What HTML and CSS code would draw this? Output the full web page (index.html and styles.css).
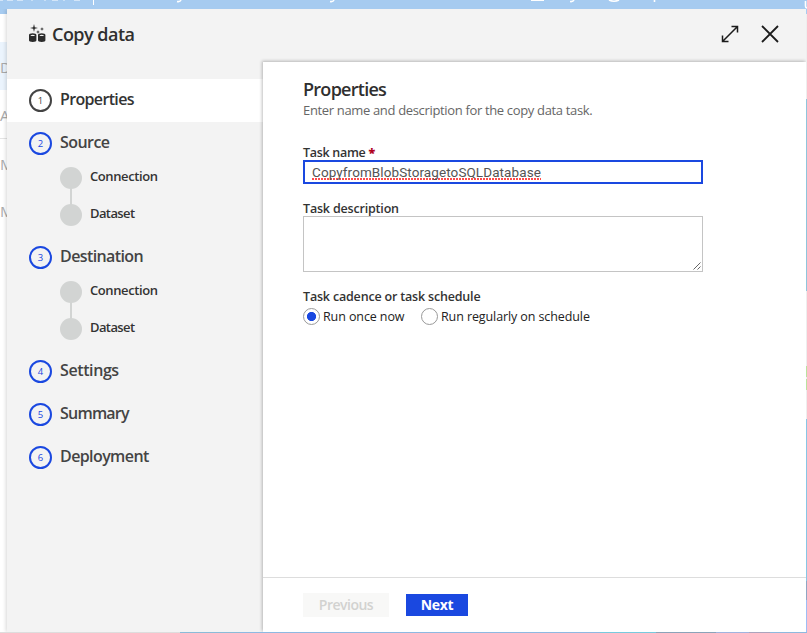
FILE: index.html
```
<!DOCTYPE html>
<html lang="en">
<head>
<meta charset="utf-8">
<title>Copy data</title>
<link rel="stylesheet" href="styles.css">
</head>
<body>
<div class="backdrop" aria-hidden="true">
  <svg class="topbar" width="807" height="14" viewBox="0 0 807 14">
    <g fill="none" stroke="#fff" stroke-width="1.6">
      <path d="M0 .2h3M7 .2h6M17 .2h6M32 0v1M45 0v1M52 .2h6M64 0v1M74 .2h6" opacity=".5"/>
      <path d="M93.500 0v5" stroke-width="1"/>
      <path d="M181 0q-1 2.200-4 1.500M334 0q-1 2.200-4 1.500M531 .3h13M574 0q-1 2-4 1.500M609 0q5 2.500 10 0M654.500 0v2"/>
      <path d="M805.500 1v5q0 2 2 2"/>
    </g>
  </svg>
  <div class="menu"><span class="hot">D</span><span>A</span><span class="ruled">M</span><span>M</span></div>
  <div class="edge"></div>
  <div class="floor"></div>
</div>
<main class="dialog">
  <header class="header">
    <svg class="logo" width="18" height="19" viewBox="0 0 18 19" fill="#2b2b2b">
      <path d="M5 0l.8 3.200L9 4l-3.200.8L5 8l-.8-3.200L1 4l3.200-.8zM13 3l.5 1.500L15 5l-1.500.5L13 7l-.5-1.500L11 5l1.500-.5zM9 6l.5 1.500L11 8l-1.500.5L9 10l-.5-1.500L7 8l1.500-.5z"/>
      <path d="M0 11Q0 9.300 3.700 9.300T7.400 11V16.300Q7.400 18 3.700 18T0 16.300zM9 11q0-1.700 3.700-1.700t3.700 1.700v5.300q0 1.700-3.700 1.700T9 16.300z"/>
      <path d="M1.200 11.400q2.500-1.500 5 0-2.500 1.200-5 0zM10.200 11.400q2.500-1.500 5 0-2.500 1.200-5 0z" fill="#f3f3f3"/>
    </svg>
    <h1 class="title">Copy data</h1>
    <svg class="expand" width="18" height="18" viewBox="0 0 18 18" fill="none" stroke="#1b1b1b" stroke-width="1.500"><path d="M1.500 16.500l15-15M10.500 1.500h6v6M1.500 10.500v6h6"/></svg>
    <svg class="close" width="18" height="18" viewBox="0 0 18 18" fill="none" stroke="#1b1b1b" stroke-width="1.800"><path d="M1 1l16 16M17 1L1 17"/></svg>
  </header>
  <div class="body">
    <nav class="steps">
      <div class="step current"><span class="num">1</span><span class="name">Properties</span></div>
      <div class="step"><span class="num">2</span><span class="name source">Source</span></div>
      <div class="subs"><div class="sub"><i></i><span>Connection</span></div><div class="sub"><i></i><span class="dataset">Dataset</span></div></div>
      <div class="step"><span class="num">3</span><span class="name">Destination</span></div>
      <div class="subs"><div class="sub"><i></i><span>Connection</span></div><div class="sub"><i></i><span class="dataset">Dataset</span></div></div>
      <div class="step"><span class="num">4</span><span class="name settings">Settings</span></div>
      <div class="step"><span class="num">5</span><span class="name summary">Summary</span></div>
      <div class="step"><span class="num">6</span><span class="name">Deployment</span></div>
    </nav>
    <section class="panel">
      <div class="form">
        <h2>Properties</h2>
        <p class="lead">Enter name and description for the copy data task.</p>
        <div class="label task-name">Task name <b>*</b></div>
        <div class="field"><span>CopyfromBlobStoragetoSQLDatabase</span></div>
        <div class="label task-desc">Task description</div>
        <div class="area"><svg width="8" height="8" viewBox="0 0 8 8" stroke="#555" stroke-width=".9"><path d="M.5 7.500l7-7M4.500 7.500l3-3"/></svg></div>
        <div class="label cadence">Task cadence or task schedule</div>
        <div class="radios">
          <span class="radio on"></span><span class="opt once">Run once now</span>
          <span class="radio"></span><span class="opt">Run regularly on schedule</span>
        </div>
      </div>
      <footer class="footer"><span class="btn prev">Previous</span><span class="btn next">Next</span></footer>
    </section>
  </div>
</main>
</body>
</html>
```
FILE: styles.css
```
* { box-sizing: border-box; }
body { margin: 0; width: 807px; height: 633px; overflow: hidden; background: #fff; color: #333; font-family: "Open Sans", "Noto Sans", sans-serif; position: relative; }
h1, h2, p { margin: 0; }
.backdrop { position: absolute; inset: 0; }
.topbar { display: block; background: #a6cbf0; }
.menu { width: 7px; overflow: hidden; padding-top: 28px; font-size: 15px; color: #a9a9a9; }
.menu span { display: block; height: 48px; line-height: 50px; }
.menu .hot { background: #ebf4fd; }
.menu .ruled { border-top: 1px solid #e4e4e4; }
.edge { position: absolute; right: 0; top: 14px; width: 1px; bottom: 0; background: linear-gradient(#eee 0 85px, #8fc5dc 85px 277px, #eee 277px 352px, #b9e29f 352px 363px, #eee 363px 365px, #b9e29f 365px 376px, #eee 376px 405px, #87c6e6 405px 567px, #8fa6c4 567px 586px, #9dbdf5 586px); }
.floor { position: absolute; left: 0; right: 0; bottom: 0; height: 1px; background: linear-gradient(90deg, #ddd 180px, #8abbd8 180px 240px, #8db9e2 240px 600px, #78cade 600px 656px, #8ba3b9 656px 716px, #a0b4df 716px 749px, #aaa4bd 749px 770px, #8eb9de 770px); }
.dialog { position: relative; margin: 9px 1px 1px 7px; width: 799px; height: 623px; background: #f3f3f3; display: flex; flex-direction: column; box-shadow: -1px 0 4px rgba(0,0,0,.16); clip-path: inset(0 0 0 -7px); }
.header { height: 53px; flex: none; display: flex; align-items: flex-start; padding: 15px 27px 0 22px; color: #2f2f2f; }
.logo { flex: none; }
.title { margin: -2px auto 0 5px; font-size: 18px; line-height: 25px; font-weight: 600; letter-spacing: -.52px; }
.expand { margin: 1px 22px 0 0; }
.close { margin-top: 1px; }
.body { flex: 1; display: flex; min-height: 0; }
.steps { width: 256px; padding-top: 17px; }
.step { height: 43px; display: flex; align-items: center; padding-left: 22px; }
.current { background: #fff; }
.num { width: 23px; height: 23px; border: 2px solid #1a48e0; border-radius: 50%; color: #1a48e0; font-size: 9.500px; line-height: 20px; text-align: center; }
.current .num { border-color: #444; color: #444; }
.name { margin: -3px 0 0 8px; font-size: 16px; line-height: 22px; font-weight: 600; color: #444; letter-spacing: -.6px; }
.current .name { color: #333; letter-spacing: -.65px; }
.source { letter-spacing: -.55px; }
.settings { letter-spacing: -.4px; }
.summary { letter-spacing: -.78px; }
.subs { height: 71px; padding: 2px 0 0 53px; display: flex; flex-direction: column; gap: 15px; }
.sub { height: 22px; display: flex; align-items: center; position: relative; font-size: 13px; font-weight: 600; line-height: 18px; color: #333; letter-spacing: -.4px; }
.sub i { width: 22px; height: 22px; border-radius: 50%; background: #d2d4d3; margin-right: 8px; }
.sub span { margin-top: -4px; }
.sub .dataset { letter-spacing: -.6px; }
.sub:first-child::after { content: ""; position: absolute; left: 10px; top: 21px; width: 2px; height: 17px; background: #d2d4d3; }
.panel { width: 543px; height: 570px; background: #fff; display: flex; flex-direction: column; box-shadow: -1px -1px 3px rgba(0,0,0,.25); }
.form { flex: 1; padding: 15px 0 0 40px; }
h2 { font-size: 18px; line-height: 25px; font-weight: 600; color: #2f2f2f; letter-spacing: -.73px; }
.lead { margin-top: -1px; font-size: 13px; line-height: 18px; color: #666; letter-spacing: -.34px; white-space: nowrap; }
.label { position: relative; top: 1px; font-size: 12.500px; line-height: 16px; font-weight: 600; letter-spacing: -.3px; color: #333; }
.label b { color: #b00020; }
.task-name { margin-top: 25px; }
.field { width: 400px; height: 24px; border: 2px solid #1a48e0; padding-left: 7px; font: 13.500px/20px Roboto, "Liberation Sans", sans-serif; letter-spacing: .09px; color: #555; }
.field span { display: inline-block; height: 18px; line-height: 20px; background: repeating-linear-gradient(90deg, #ff4c4c 0 2px, transparent 2px 3px) left bottom / 100% 2px no-repeat; }
.task-desc { margin-top: 16px; letter-spacing: -.18px; }
.area { width: 400px; height: 56px; border: 1px solid #c4c4c4; display: flex; justify-content: flex-end; align-items: flex-end; padding: 1px; }
.cadence { margin-top: 16px; letter-spacing: -.18px; }
.radios { display: flex; align-items: center; margin-top: 4px; height: 17px; }
.radio { width: 17px; height: 17px; border: 1px solid #999; border-radius: 50%; margin-right: 3px; }
.radio.on { background: radial-gradient(circle, #1a48e0 4.200px, #fff 5px); }
.opt { font-size: 12.500px; line-height: 17px; letter-spacing: -.1px; color: #222; white-space: nowrap; }
.once { width: 98px; }
.footer { height: 55px; border-top: 1px solid #ddd; display: flex; align-items: center; padding-left: 40px; gap: 17px; }
.btn { font-size: 14px; font-weight: 600; text-align: center; letter-spacing: -.5px; }
.prev { width: 86px; height: 24px; line-height: 24px; background: #f8f8f7; color: #d2d2d0; }
.next { width: 62px; height: 22px; line-height: 22px; background: #1a48e0; color: #fff; letter-spacing: -.3px; font-weight: 700; }
```
